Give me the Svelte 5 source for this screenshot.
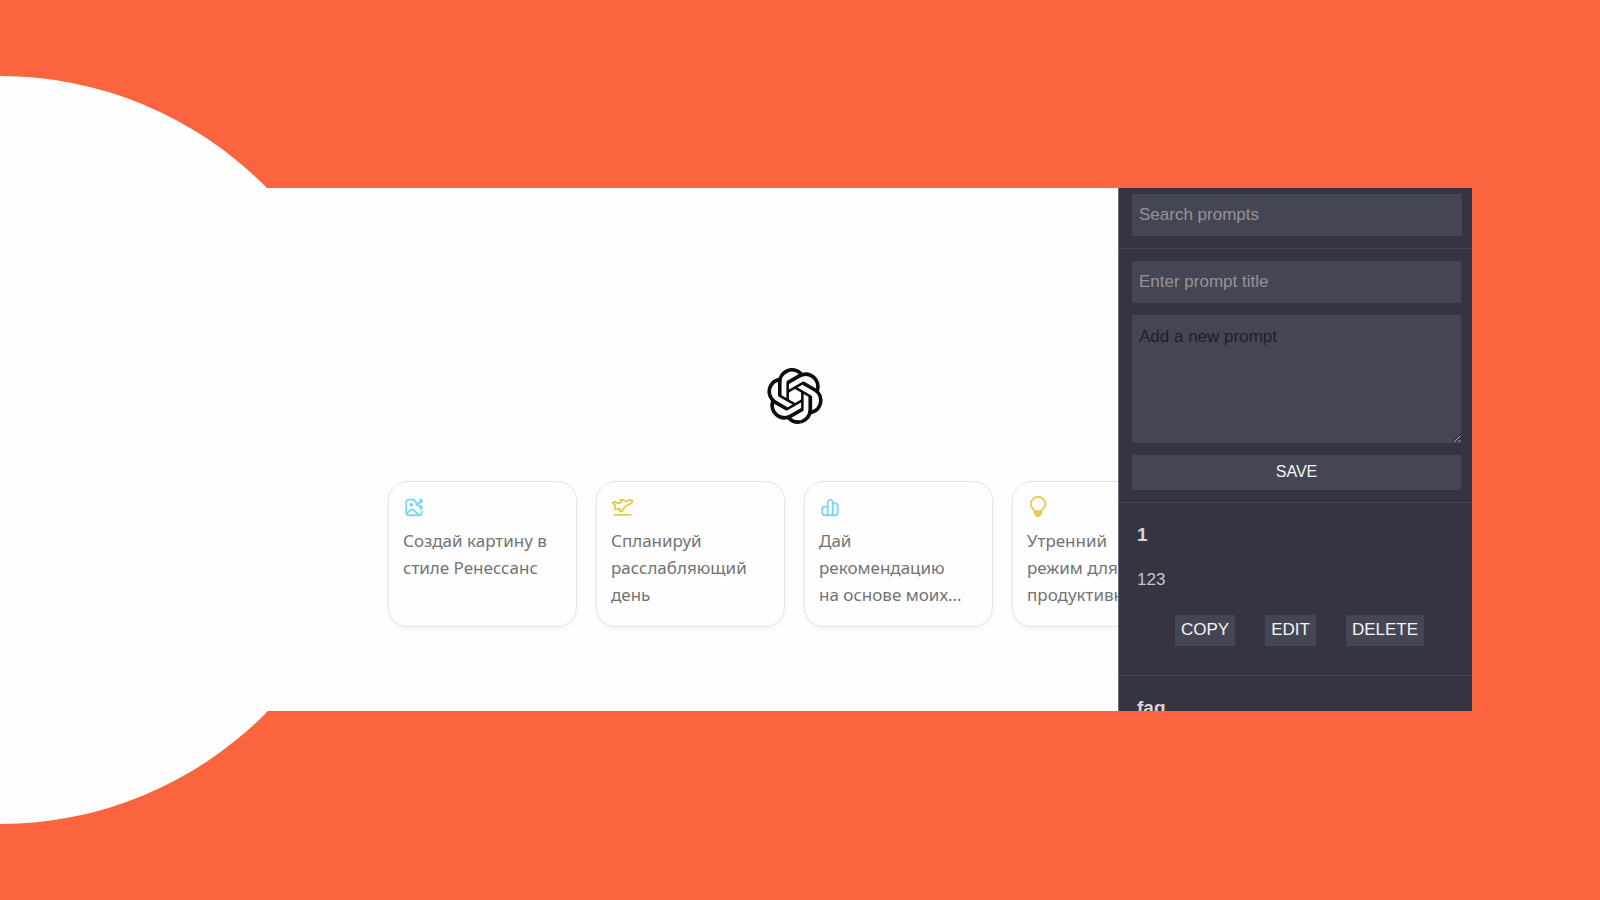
<script>
  const suggestions = [
    { icon: 'image', color: '#7fd5ee', lines: ['Создай картину в', 'стиле Ренессанс'] },
    { icon: 'plane', color: '#e6c94c', lines: ['Спланируй', 'расслабляющий', 'день'] },
    { icon: 'chart', color: '#7fd5ee', lines: ['Дай', 'рекомендацию', 'на основе моих…'] },
    { icon: 'bulb', color: '#e6c94c', lines: ['Утренний', 'режим для', 'продуктивн'] }
  ];

  const prompts = [
    { title: '1', body: '123' },
    { title: 'faq', body: '' }
  ];
</script>

<main class="page">
  <section class="banner">
    <div class="chat">
      <div class="welcome">
        <svg class="logo" viewBox="0 0 24 24" aria-hidden="true">
          <path fill="currentColor" d="M22.2819 9.8211a5.9847 5.9847 0 0 0-.5157-4.9108 6.0462 6.0462 0 0 0-6.5098-2.9A6.0651 6.0651 0 0 0 4.9807 4.1818a5.9847 5.9847 0 0 0-3.9977 2.9 6.0462 6.0462 0 0 0 .7427 7.0966 5.98 5.98 0 0 0 .511 4.9107 6.051 6.051 0 0 0 6.5146 2.9001A5.9847 5.9847 0 0 0 13.2599 24a6.0557 6.0557 0 0 0 5.7718-4.2058 5.9894 5.9894 0 0 0 3.9977-2.9001 6.0557 6.0557 0 0 0-.7475-7.0729zm-9.022 12.6081a4.4755 4.4755 0 0 1-2.8764-1.0408l.1419-.0804 4.7783-2.7582a.7948.7948 0 0 0 .3927-.6813v-6.7369l2.02 1.1686a.071.071 0 0 1 .038.052v5.5826a4.504 4.504 0 0 1-4.4945 4.4944zm-9.6607-4.1254a4.4708 4.4708 0 0 1-.5346-3.0137l.142.0852 4.783 2.7582a.7712.7712 0 0 0 .7806 0l5.8428-3.3685v2.3324a.0804.0804 0 0 1-.0332.0615L9.74 19.9502a4.4992 4.4992 0 0 1-6.1408-1.6464zM2.3408 7.8956a4.485 4.485 0 0 1 2.3655-1.9728V11.6a.7664.7664 0 0 0 .3879.6765l5.8144 3.3543-2.0201 1.1685a.0757.0757 0 0 1-.071 0l-4.8303-2.7865A4.504 4.504 0 0 1 2.3408 7.872zm16.5963 3.8558L13.1038 8.364 15.1192 7.2a.0757.0757 0 0 1 .071 0l4.8303 2.7913a4.4944 4.4944 0 0 1-.6765 8.1042v-5.6772a.79.79 0 0 0-.407-.667zm2.0107-3.0231l-.142-.0852-4.7735-2.7818a.7759.7759 0 0 0-.7854 0L9.409 9.2297V6.8974a.0662.0662 0 0 1 .0284-.0615l4.8303-2.7866a4.4992 4.4992 0 0 1 6.6802 4.66zM8.3065 12.863l-2.02-1.1638a.0804.0804 0 0 1-.038-.0567V6.0742a4.4992 4.4992 0 0 1 7.3757-3.4537l-.142.0805L8.704 5.459a.7948.7948 0 0 0-.3927.6813zm1.0976-2.3654l2.602-1.4998 2.6069 1.4998v2.9994l-2.5974 1.4997-2.6067-1.4997Z" />
        </svg>
        <div class="cards">
          {#each suggestions as item}
            <button class="card" type="button">
              <svg class="icon" viewBox="0 0 24 24" style="color: {item.color}" aria-hidden="true">
                {#if item.icon === 'image'}
                  <path d="M11.500 4H6.500A3 3 0 0 0 3.500 7v11a3 3 0 0 0 3 3h11a3 3 0 0 0 3-3v-1" />
                  <path d="M4 19l4.500-4a2 2 0 0 1 2.600 0l6 5.500" />
                  <circle cx="9" cy="9.500" r="1" fill="currentColor" />
                  <path d="M11.500 4.200c3 1 3.500 8.300 9 8.300M14.500 10c2-1.500 2.500-4.500 6-4.500M18.800 3.500l2 2-2 2M18.800 10.500l2 2-2 2" />
                {:else if item.icon === 'plane'}
                  <path d="M3.500 20.500h18" />
                  <path d="M2 7l3-.800 3 2 3-1.200-1-2.300 2.500-.700 4 2 3.500-1.500c1.500-.5 3-.3 3.200.8.2 1.200-.7 2.400-2.200 3.200L15.500 11.500 12 16.500l-2.200.5-.3-3.500-3.500 1c-1 .2-1.800-.1-2-1l.5-3z" />
                {:else if item.icon === 'chart'}
                  <path d="M9.500 21V6a3 3 0 0 1 5.500 0v15" />
                  <path d="M9.500 11.500h-3a3 3 0 0 0-3 3V18a3 3 0 0 0 3 3h11a3 3 0 0 0 3-3v-7a3 3 0 0 0-3-3H15" />
                {:else}
                  <path d="M8.500 16.500C8.500 14.500 4 13.500 4 9a8 8 0 0 1 16 0c0 4.500-4.500 5.500-4.500 7.500z" />
                  <path d="M8.500 16.500v2a2 2 0 0 0 2 2h3a2 2 0 0 0 2-2v-2M9 18.500h6M11 22h2" />
                {/if}
              </svg>
              <span class="card-text">{item.lines.join('\n')}</span>
            </button>
          {/each}
        </div>
      </div>
    </div>

    <aside class="sidebar">
      <div class="search">
        <input class="field" type="text" placeholder="Search prompts" aria-label="Search prompts" />
      </div>
      <form class="editor">
        <input class="field" type="text" placeholder="Enter prompt title" aria-label="Enter prompt title" />
        <textarea class="field area" placeholder="Add a new prompt" aria-label="Add a new prompt"></textarea>
        <button class="save" type="button">SAVE</button>
      </form>
      {#each prompts as prompt}
        <article class="prompt">
          <h2>{prompt.title}</h2>
          {#if prompt.body}
            <p>{prompt.body}</p>
            <div class="actions">
              <button type="button">COPY</button>
              <button type="button">EDIT</button>
              <button type="button">DELETE</button>
            </div>
          {/if}
        </article>
      {/each}
    </aside>
  </section>
</main>

<style>
  :global(body) {
    margin: 0;
  }

  .page,
  .page :global(*) {
    box-sizing: border-box;
  }

  .page {
    position: relative;
    display: flex;
    height: 100vh;
    padding: 188px 128px 189px 0;
    overflow: hidden;
    background: #fb643f;
    font-family: "Liberation Sans", Arial, sans-serif;
  }

  .page::before {
    content: "";
    position: absolute;
    top: 50%;
    left: 0;
    width: 748px;
    height: 748px;
    border-radius: 50%;
    background: #fefefe;
    transform: translate(-50%, -50%);
  }

  .banner {
    position: relative;
    display: flex;
    flex: 1;
    min-width: 0;
    overflow: hidden;
    background: #fefefe;
  }

  .chat {
    flex: 1;
    min-width: 0;
    overflow: hidden;
    padding: 180px 0 0 388px;
  }

  .welcome {
    display: flex;
    flex-direction: column;
    align-items: center;
    gap: 57px;
    width: max-content;
  }

  .logo {
    width: 56px;
    height: 56px;
    color: #0d0d0d;
  }

  .cards {
    display: flex;
    gap: 19px;
  }

  .card {
    display: flex;
    flex-direction: column;
    gap: 9px;
    width: 189px;
    height: 146px;
    padding: 14px;
    border: 1px solid #e5e5e5;
    border-radius: 20px;
    background: #fefefe;
    box-shadow: 0 2px 6px rgba(0, 0, 0, 0.05);
    color: #737373;
    font: 17px/27px "Noto Sans", "Open Sans", sans-serif;
    text-align: left;
  }

  .card-text {
    white-space: pre;
  }

  .icon {
    flex: none;
    width: 22px;
    height: 22px;
    fill: none;
    stroke: currentColor;
    stroke-width: 2;
    stroke-linecap: round;
    stroke-linejoin: round;
  }

  .sidebar {
    flex: none;
    width: 354px;
    overflow: hidden;
    border-left: 1px solid #6c6d78;
    background: #343541;
    color: #d5d7da;
  }

  .search {
    padding: 6px 10px 12px 13px;
    border-bottom: 1px solid #444654;
  }

  .editor {
    display: flex;
    flex-direction: column;
    gap: 12px;
    padding: 12px 11px 12px 13px;
    border-bottom: 1px solid #444654;
  }

  .field {
    display: block;
    width: 100%;
    height: 42px;
    padding: 0 7px;
    border: 0;
    border-radius: 0;
    outline: 0;
    background: #444654;
    color: #ececf1;
    font: 17px/20px "Liberation Sans", Arial, sans-serif;
  }

  .field::placeholder {
    color: #949496;
    opacity: 1;
  }

  .area {
    height: 128px;
    padding: 12px 7px;
    resize: vertical;
  }

  .area::placeholder {
    color: #202126;
  }

  button {
    border: 0;
    border-radius: 0;
    background: #444654;
    color: #f4f4f4;
    font: 17px/20px "Liberation Sans", Arial, sans-serif;
  }

  .save {
    height: 35px;
    padding: 0 0 2px;
    font-size: 16px;
  }

  .prompt {
    padding: 20px 18px 29px;
    border-bottom: 1px solid #444654;
  }

  h2 {
    margin: 0;
    font-size: 19px;
    line-height: 24px;
  }

  p {
    margin: 23px 0 25px;
    color: #c5c7ca;
    font-size: 17px;
    line-height: 20px;
  }

  .actions {
    display: flex;
    gap: 30px;
    padding-left: 38px;
  }

  .actions button {
    padding: 5px 6px 6px;
  }
</style>
